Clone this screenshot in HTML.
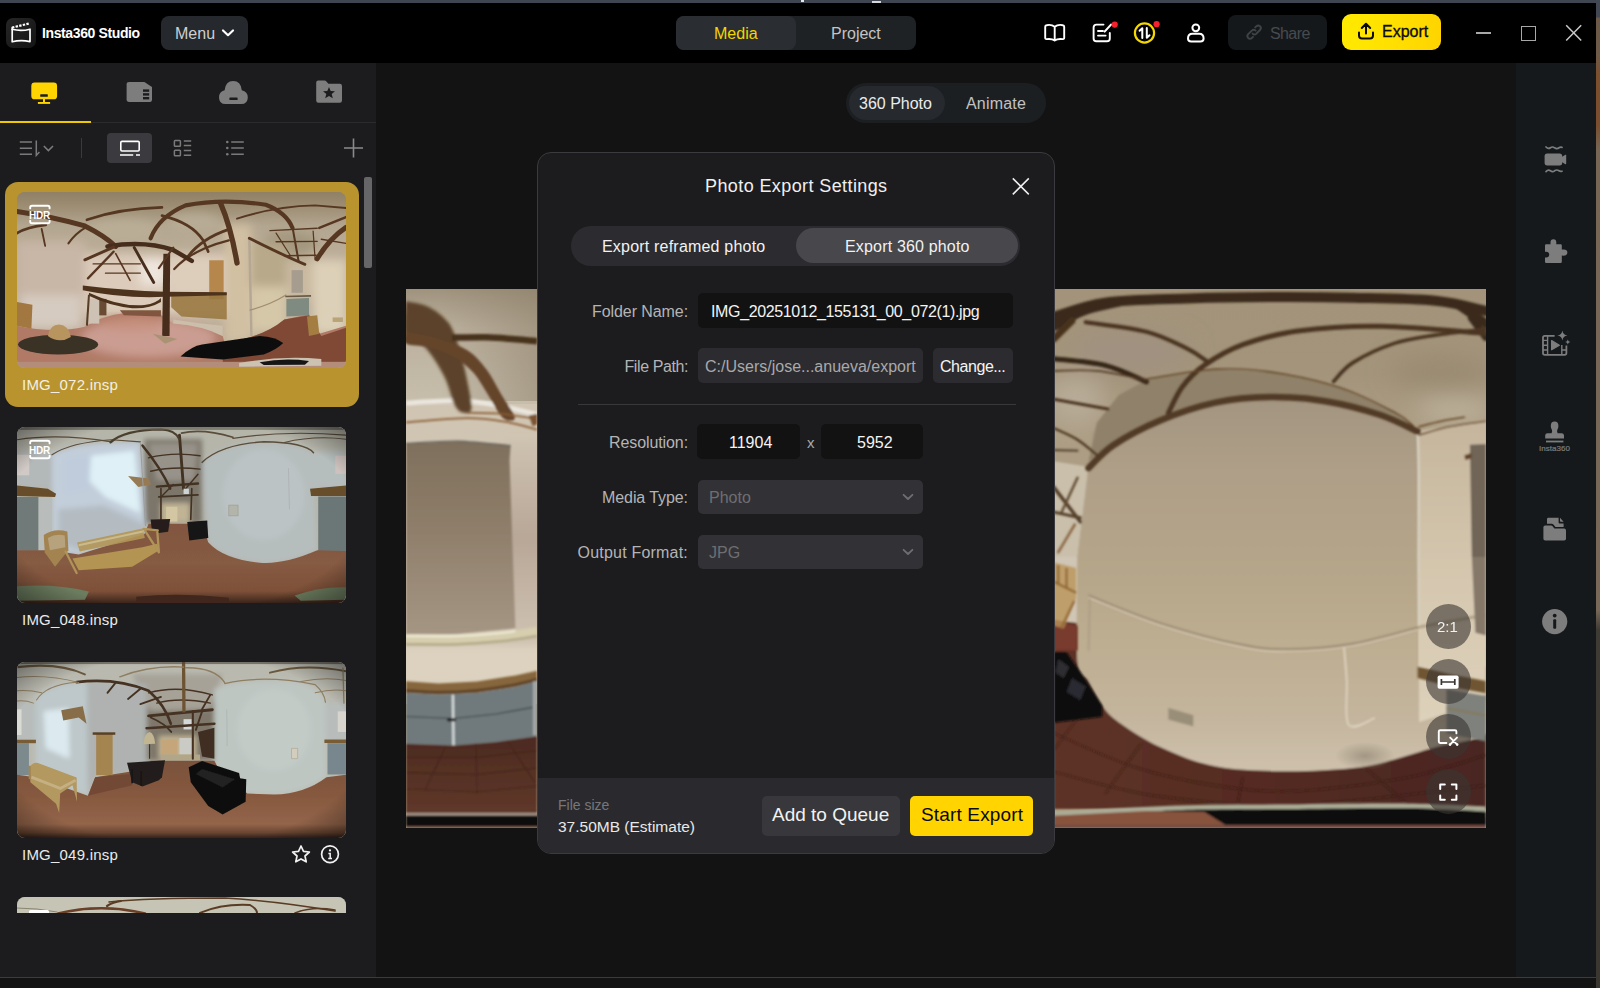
<!DOCTYPE html>
<html lang="en">
<head>
<meta charset="utf-8">
<title>Insta360 Studio</title>
<style>
*{box-sizing:border-box;margin:0;padding:0}
html,body{width:1600px;height:988px;overflow:hidden;background:#131313}
body{position:relative;font-family:"Liberation Sans",sans-serif;color:#e6e6e6;font-size:16px}
.abs{position:absolute}
.t{position:absolute;white-space:nowrap;line-height:1}
#deskTop{left:0;top:0;width:1600px;height:3px;background:#3f4651}
#deskRight{left:1596px;top:0;width:4px;height:988px;background:linear-gradient(#414853 0,#414853 17px,#6c5846 18px,#6e5a48 55px,#7c4f2e 75px,#7a4e2e 125px,#776654 150px,#786858 610px,#3e3a34 630px,#3a3630 988px)}
#titlebar{left:0;top:3px;width:1596px;height:60px;background:#000}
#sidebar{left:0;top:63px;width:376px;height:914px;background:#1c1c1e}
#main{left:376px;top:63px;width:1140px;height:914px;background:#131313}
#rightbar{left:1516px;top:63px;width:80px;height:914px;background:#15191c}
#statusline{left:0;top:977px;width:1596px;height:1px;background:#3c3c3c}
#status{left:0;top:978px;width:1596px;height:10px;background:#131313}
.ph{overflow:hidden;border-radius:8px;background:#888}
.ph svg{display:block;width:100%;height:100%}
.fb{width:45px;height:45px;border-radius:50%;background:rgba(58,54,50,.6)}
.lab{right:912px;font-size:16px;color:#b4b4b6;text-align:right}
</style>
</head>
<body>
<div class="abs" id="deskTop"></div>
<div class="abs" id="deskRight"></div>
<div class="abs" id="titlebar"></div>
<div class="abs" id="sidebar"></div>
<div class="abs" id="main"></div>
<div class="abs" id="rightbar"></div>
<div class="abs" id="statusline"></div>
<div class="abs" id="status"></div>

<!-- top desktop artifacts -->
<div class="abs" style="left:801px;top:0;width:3px;height:2px;background:#e8e8e8"></div>
<div class="abs" style="left:872px;top:1px;width:9px;height:2px;background:#d8d8d8"></div>
<!-- logo -->
<div class="abs" style="left:6px;top:18px;width:30px;height:30px;border-radius:7px;background:linear-gradient(135deg,#262626,#141414)"></div>
<svg class="abs" style="left:6px;top:18px" width="30" height="30" viewBox="0 0 30 30" fill="none" stroke="#fff">
<path d="M6.2 11.3 Q15 13.6 24 11.2 L24 23.6 Q15 21.6 6.2 23.8 Z" stroke-width="1.7" stroke-linejoin="round"/>
<path d="M6 9.6 L23.6 5.4" stroke-width="2.2" stroke-dasharray="2.4 1.3"/>
<path d="M6.2 9 L6.2 12" stroke-width="1.6"/>
</svg>
<div class="t" style="left:42px;top:26px;font-size:14px;font-weight:700;color:#fff;letter-spacing:-0.38px">Insta360 Studio</div>
<!-- menu -->
<div class="abs" style="left:161px;top:16px;width:87px;height:34px;border-radius:8px;background:#25282c"></div>
<div class="t" style="left:175px;top:26px;font-size:16px;color:#cfcfcf">Menu</div>
<svg class="abs" style="left:220px;top:27px" width="16" height="12" viewBox="0 0 16 12" fill="none" stroke="#fff" stroke-width="2.2" stroke-linecap="round" stroke-linejoin="round"><path d="M3 3.5 L8 8.2 L13 3.5"/></svg>
<!-- media/project -->
<div class="abs" style="left:676px;top:16px;width:240px;height:34px;border-radius:8px;background:#1f2225"></div>
<div class="abs" style="left:676px;top:16px;width:120px;height:34px;border-radius:8px;background:#2a2d32"></div>
<div class="t" style="left:714px;top:26px;font-size:16px;color:#f3d500">Media</div>
<div class="t" style="left:831px;top:26px;font-size:16px;color:#c4c4c4">Project</div>
<!-- book icon -->
<svg class="abs" style="left:1042px;top:21px" width="26" height="24" viewBox="0 0 26 24" fill="none" stroke="#fff" stroke-width="1.9" stroke-linejoin="round" stroke-linecap="round">
<path d="M12.7 5.8 C10.5 4 6.5 3.8 4.6 4.2 Q3.2 4.4 3.2 5.8 L3.2 16.8 Q3.2 18.3 4.7 18.1 C7 17.8 10.6 18 12.7 19.6 C14.8 18 18.4 17.8 20.7 18.1 Q22.2 18.3 22.2 16.8 L22.2 5.8 Q22.2 4.4 20.8 4.2 C18.9 3.8 14.9 4 12.7 5.8 Z M12.7 5.8 L12.7 19.4"/>
</svg>
<!-- edit icon -->
<svg class="abs" style="left:1090px;top:20px" width="30" height="26" viewBox="0 0 30 26" fill="none" stroke="#fff" stroke-width="1.9" stroke-linejoin="round" stroke-linecap="round">
<path d="M13.5 4.6 L6.4 4.6 Q3.6 4.6 3.6 7.4 L3.6 18.4 Q3.6 21.2 6.4 21.2 L17 21.2 Q19.8 21.2 19.8 18.4 L19.8 13"/>
<path d="M8 11 L13 11 M8 15.6 L15.6 15.6"/>
<path d="M14.6 11.6 L21 4.6" stroke-width="2.1"/>
<circle cx="24.7" cy="4.6" r="3.1" fill="#f5222d" stroke="none"/>
</svg>
<!-- sync icon -->
<svg class="abs" style="left:1130px;top:18px" width="32" height="30" viewBox="0 0 32 30" fill="none" stroke-linecap="round" stroke-linejoin="round">
<circle cx="14.5" cy="15" r="9.6" stroke="#f5d800" stroke-width="2.2"/>
<path d="M12.3 20 L12.3 10.2 L9.6 12.8" stroke="#fff" stroke-width="2"/>
<path d="M16.8 10 L16.8 19.8 L19.5 17.2" stroke="#fff" stroke-width="2"/>
<circle cx="26.6" cy="6.2" r="3.1" fill="#f5222d"/>
</svg>
<!-- user icon -->
<svg class="abs" style="left:1184px;top:21px" width="24" height="24" viewBox="0 0 24 24" fill="none" stroke="#fff" stroke-width="2">
<circle cx="11.8" cy="6.8" r="3.4"/>
<path d="M4 17.4 Q4 12.8 8.4 12.8 L15.2 12.8 Q19.6 12.8 19.6 17.4 Q19.6 20.4 16.4 20.4 L7.2 20.4 Q4 20.4 4 17.4 Z" stroke-linejoin="round"/>
</svg>
<!-- share -->
<div class="abs" style="left:1228px;top:15px;width:99px;height:35px;border-radius:8px;background:#15181b"></div>
<svg class="abs" style="left:1244px;top:22px" width="20" height="20" viewBox="0 0 20 20" fill="none" stroke="#3f4246" stroke-width="1.9" stroke-linecap="round" stroke-linejoin="round">
<path d="M8.6 11.6 Q10.4 13.4 12.4 11.6 L16 8 Q17.8 6 16 4.2 Q14.2 2.6 12.4 4.2 L11.2 5.4"/>
<path d="M11.6 8.6 Q9.8 6.8 7.8 8.6 L4.2 12.2 Q2.4 14.2 4.2 16 Q6 17.6 7.8 16 L9 14.8"/>
</svg>
<div class="t" style="left:1270px;top:26px;font-size:16px;color:#474a4e;letter-spacing:-0.6px">Share</div>
<!-- export -->
<div class="abs" style="left:1342px;top:14px;width:99px;height:36px;border-radius:9px;background:linear-gradient(90deg,#ffea00 0%,#ffe000 50%,#ffd400 100%)"></div>
<svg class="abs" style="left:1356px;top:21px" width="20" height="20" viewBox="0 0 20 20" fill="none" stroke="#0a0a0a" stroke-width="2" stroke-linecap="round" stroke-linejoin="round">
<path d="M10 12.4 L10 3.2 M5.8 7 L10 2.8 L14.2 7"/>
<path d="M3 11.6 L3 14.4 Q3 17.4 6 17.4 L14 17.4 Q17 17.4 17 14.4 L17 11.6"/>
</svg>
<div class="t" style="left:1382px;top:24px;font-size:16px;color:#0a0a0a;-webkit-text-stroke:0.3px #0a0a0a">Export</div>
<!-- window controls -->
<div class="abs" style="left:1476px;top:32px;width:15px;height:1.5px;background:#a8a8a8"></div>
<div class="abs" style="left:1521px;top:26px;width:15px;height:15px;border:1.6px solid #a8a8a8"></div>
<svg class="abs" style="left:1564px;top:23px" width="20" height="20" viewBox="0 0 20 20" stroke="#c8c8c8" stroke-width="1.5"><path d="M2.2 2.2 L17.2 17.6 M17.2 2.2 L2.2 17.6"/></svg>
<!--TITLEBAR-END-->
<!-- tab icons -->
<svg class="abs" style="left:28px;top:78px" width="32" height="30" viewBox="0 0 32 30">
<rect x="3.3" y="4.6" width="25.8" height="16.7" rx="3.4" fill="#ffd400"/>
<rect x="12.2" y="16.2" width="7.6" height="2.6" rx="0.6" fill="#1c1c1e"/>
<rect x="15" y="21" width="2" height="3.6" fill="#ffd400"/>
<rect x="9.9" y="24" width="12.2" height="1.9" fill="#ffd400"/>
</svg>
<svg class="abs" style="left:124px;top:78px" width="32" height="30" viewBox="0 0 32 30">
<path d="M5.2 4 L20.4 4 L28 9 L28 21.8 Q28 24 25.8 24 L5.2 24 Q2.6 24 2.6 21.6 L2.6 6.4 Q2.6 4 5.2 4 Z" fill="#7d7d7d"/>
<rect x="19" y="11.4" width="6.2" height="2.4" fill="#1c1c1e"/><rect x="19" y="15.2" width="6.2" height="2.4" fill="#1c1c1e"/><rect x="19" y="19" width="6.2" height="2.4" fill="#1c1c1e"/>
</svg>
<svg class="abs" style="left:216px;top:78px" width="36" height="30" viewBox="0 0 36 30">
<path d="M9.6 26 Q3 26 3 19.4 Q3 13.6 8.6 12.2 Q9.6 3 17.2 3 Q24.8 3 25.8 12.2 Q31.8 13.6 31.8 19.4 Q31.8 26 25.2 26 Z" fill="#7d7d7d"/>
<rect x="13.4" y="19.4" width="8.2" height="2.6" rx="0.6" fill="#1c1c1e"/>
</svg>
<svg class="abs" style="left:313px;top:78px" width="32" height="30" viewBox="0 0 32 30">
<path d="M5.2 2.5 L11.4 2.5 Q12.6 2.5 13.4 3.4 L15.4 5.8 L26.8 5.8 Q29 5.8 29 8 L29 22.6 Q29 24.8 26.8 24.8 L5.4 24.8 Q3.2 24.8 3.2 22.6 L3.2 4.6 Q3.2 2.5 5.2 2.5 Z" fill="#7d7d7d"/>
<path d="M16 9 L17.7 13 L22 13.3 L18.7 16.1 L19.8 20.3 L16 18 L12.2 20.3 L13.3 16.1 L10 13.3 L14.3 13 Z" fill="#1c1c1e"/>
</svg>
<div class="abs" style="left:0;top:122px;width:376px;height:1px;background:#2b2b2d"></div>
<div class="abs" style="left:0;top:121px;width:91px;height:2px;background:#f0c800"></div>
<!-- toolbar -->
<svg class="abs" style="left:16px;top:136px" width="44" height="24" viewBox="0 0 44 24" fill="none" stroke="#7a7a7a" stroke-width="1.5">
<path d="M3.8 6 L16 6 M3.8 12.2 L16 12.2 M3.8 18.2 L16 18.2"/>
<path d="M20.3 4.4 L20.3 19.4 L23.4 16"/>
<path d="M27.8 10 L32.4 14.6 L37 10" stroke-width="1.6"/>
</svg>
<div class="abs" style="left:81px;top:138px;width:1px;height:20px;background:#3a3a3c"></div>
<div class="abs" style="left:107px;top:133px;width:45px;height:30px;border-radius:4px;background:#3b3b3f"></div>
<svg class="abs" style="left:116px;top:136px" width="28" height="24" viewBox="0 0 28 24" fill="none" stroke="#fff" stroke-width="1.6">
<rect x="4.8" y="5.4" width="18.4" height="9.6" rx="1.2"/>
<path d="M4 19 L17.2 19 M20 19 L24 19"/>
</svg>
<svg class="abs" style="left:170px;top:136px" width="24" height="24" viewBox="0 0 24 24" fill="none" stroke="#7a7a7a" stroke-width="1.5">
<rect x="4.4" y="4.6" width="6" height="5.6" rx="0.8"/><rect x="4.4" y="14.2" width="6" height="5.6" rx="0.8"/>
<path d="M13.8 5 L21.2 5 M13.8 9.6 L21.2 9.6 M13.8 14.6 L21.2 14.6 M13.8 19.2 L21.2 19.2"/>
</svg>
<svg class="abs" style="left:222px;top:136px" width="24" height="24" viewBox="0 0 24 24" fill="none" stroke="#7a7a7a" stroke-width="1.6">
<path d="M9.2 6 L21.8 6 M9.2 12 L21.8 12 M9.2 18.2 L21.8 18.2"/>
<circle cx="5.3" cy="6" r="1.3" fill="#7a7a7a" stroke="none"/><circle cx="5.3" cy="12" r="1.3" fill="#7a7a7a" stroke="none"/><circle cx="5.3" cy="18.2" r="1.3" fill="#7a7a7a" stroke="none"/>
</svg>
<svg class="abs" style="left:342px;top:136px" width="24" height="24" viewBox="0 0 24 24" fill="none" stroke="#8a8a8a" stroke-width="1.6"><path d="M2 12 L21 12 M11.5 2.6 L11.5 21.4"/></svg>
<!-- scrollbar -->
<div class="abs" style="left:364px;top:177px;width:8px;height:91px;border-radius:2px;background:#666668"></div>
<!-- thumbnails -->
<div class="abs" style="left:5px;top:182px;width:354px;height:225px;border-radius:13px;background:#b9942e"></div>
<div class="abs ph" style="left:17px;top:192px;width:329px;height:176px"><svg viewBox="0 0 1600 856" preserveAspectRatio="none">
<defs><filter id="bl1" x="-5%" y="-5%" width="110%" height="110%"><feGaussianBlur stdDeviation="3.2"/></filter>
<filter id="bl1b" x="-10%" y="-10%" width="120%" height="120%"><feGaussianBlur stdDeviation="22"/></filter>
<linearGradient id="g1c" gradientUnits="userSpaceOnUse" x1="0" y1="0" x2="0" y2="330"><stop offset="0" stop-color="#908065"/><stop offset=".22" stop-color="#9d8e74"/><stop offset=".5" stop-color="#b3a690"/><stop offset="1" stop-color="#bdaf9a"/></linearGradient>
</defs>
<rect width="1600" height="856" fill="url(#g1c)"/>
<g filter="url(#bl1b)">
<ellipse cx="520" cy="190" rx="170" ry="55" fill="#B9AD96"/>
<ellipse cx="860" cy="150" rx="130" ry="45" fill="#B8AC95"/>
<ellipse cx="1330" cy="250" rx="130" ry="60" fill="#A3977F"/>
<rect x="0" y="240" width="330" height="430" fill="#C8B6A6"/>
<rect x="20" y="500" width="290" height="160" fill="#D6CBC0"/>
<rect x="330" y="300" width="690" height="300" fill="#DCCBBA"/>
<rect x="600" y="330" width="120" height="120" fill="#EEE6DE"/>
<rect x="760" y="330" width="180" height="160" fill="#DDCDBB"/>
<rect x="1010" y="160" width="130" height="570" fill="#D2C0A3"/>
<rect x="1140" y="250" width="170" height="210" fill="#B8A98A"/>
<rect x="1140" y="460" width="170" height="220" fill="#D5C8A8"/>
<rect x="1310" y="340" width="130" height="180" fill="#C9B9A0"/>
<rect x="1440" y="330" width="160" height="360" fill="#DDD0B8"/>
</g>
<g filter="url(#bl1)">
<path d="M0 650 Q180 690 330 655 Q420 600 520 590 L700 598 L760 640 Q900 650 1000 700 L1010 735 Q1200 705 1300 620 L1420 595 L1470 690 L1600 650 L1600 856 L0 856 Z" fill="#B07A66"/>
<g filter="url(#bl1b)"><ellipse cx="640" cy="710" rx="330" ry="95" fill="#CDA197" opacity=".9"/><ellipse cx="560" cy="640" rx="160" ry="35" fill="#C58D7A" opacity=".8"/></g>
<path d="M1010 735 Q1200 705 1300 620 L1420 600 L1480 700 L1600 660 L1600 830 L1000 830 Z" fill="#7C4834" opacity=".95"/>
<rect x="0" y="826" width="1600" height="30" fill="#B48C7A"/>
<path d="M500 575 L700 575 L700 605 L520 600 Z" fill="#80573f"/>
<rect x="345" y="520" width="55" height="120" fill="#cec2b4"/>
<rect x="400" y="520" width="35" height="80" fill="#674c32"/>
<path d="M0 535 L75 548 L70 665 L0 650 Z" fill="#a2773f"/>
<rect x="935" y="332" width="70" height="190" fill="#b6874d"/>
<path d="M750 490 L1020 490 L1020 620 L800 605 L750 560 Z" fill="#97763d" opacity=".85"/>
<path d="M760 620 Q880 640 1000 650 L1000 700 Q900 650 760 640 Z" fill="#cbbeaa"/>
<path d="M320 455 Q520 480 720 485 L1020 488 L1020 502 L720 510 Q520 520 320 478 Z" fill="#4d321c"/>
<path d="M350 490 Q500 560 620 550 Q680 540 700 515 L700 535 Q640 570 560 565 Q450 555 350 505 Z" fill="#4d321c"/>
<path d="M350 500 L340 650" stroke="#593e26" stroke-width="10" fill="none"/>
<path d="M1130 230 L1140 700" stroke="#b4a794" stroke-width="12" fill="none"/>
<path d="M1130 575 Q1230 550 1310 500" stroke="#a28d70" stroke-width="6" fill="none"/>
<rect x="1335" y="380" width="55" height="110" fill="#a69d8f"/>
<path d="M1310 520 L1420 515 L1420 600 L1310 605 Z" fill="#7f8a80"/>
<path d="M1305 508 L1430 505" stroke="#695a45" stroke-width="8"/>
<path d="M1410 605 L1460 600 L1470 690 L1420 700 Z" fill="#a37d42"/>
<rect x="1535" y="610" width="50" height="22" fill="#b8a479"/>
<ellipse cx="200" cy="742" rx="195" ry="48" fill="#3A3028"/>
<path d="M150 700 Q160 645 205 645 Q250 648 262 705 Q205 740 150 700 Z" fill="#b8945f"/>
<path d="M712 300 L745 300 L742 700 L706 700 Z" fill="#472d1c"/>
<path d="M660 690 L740 705 L780 715 L720 738 Z" fill="#aa9375"/>
<path d="M795 800 Q850 750 900 742 L1180 700 Q1260 705 1295 735 Q1260 770 1200 790 L1000 815 Z" fill="#0f0f0f"/>
<path d="M1080 832 Q1280 795 1480 812 L1480 845 L1080 850 Z" fill="#ccc2b2"/>
<path d="M1180 828 Q1300 805 1420 822 L1400 840 L1200 842 Z" fill="#181818"/>
<g fill="none" stroke="#573721" stroke-linecap="round">
<path d="M0 95 Q170 120 330 165 Q430 215 480 265" stroke-width="24"/>
<path d="M0 200 Q50 170 140 160" stroke-width="14"/>
<path d="M120 180 L137 262" stroke-width="9"/>
<path d="M250 250 Q285 200 335 172" stroke-width="10"/>
<path d="M340 135 Q500 80 705 75" stroke-width="13"/>
<path d="M650 225 Q690 120 820 65 Q1000 30 1210 62 Q1310 100 1340 175" stroke-width="20"/>
<path d="M705 115 Q850 150 905 235 L930 290" stroke-width="13"/>
<path d="M990 55 Q1040 170 1070 345" stroke-width="26"/>
<path d="M830 315 Q900 225 1030 182" stroke-width="14"/>
<path d="M765 375 Q850 280 1030 235" stroke-width="11"/>
<path d="M440 265 Q620 235 760 282 L850 335" stroke-width="22" stroke="#472d1c"/>
<path d="M330 330 L470 268" stroke-width="14"/>
<path d="M345 420 L470 290" stroke-width="11"/>
<path d="M570 270 L665 440" stroke-width="14" stroke="#472d1c"/>
<path d="M480 300 L550 430" stroke-width="8"/>
<path d="M370 350 L600 350 M430 395 L600 395" stroke-width="6"/>
<path d="M690 370 L760 270" stroke-width="10"/>
<path d="M1070 130 Q1250 70 1450 65 L1600 78" stroke-width="9"/>
<path d="M1130 225 Q1300 310 1400 352" stroke-width="14"/>
<path d="M1230 188 L1460 176 M1260 242 L1460 240 M1300 310 L1455 308" stroke-width="7"/>
<path d="M1340 172 L1370 340" stroke-width="10"/>
<path d="M1260 200 L1330 310 M1440 190 L1450 330" stroke-width="6"/>
<path d="M1460 325 Q1520 225 1600 172" stroke-width="24"/>
<path d="M1470 175 L1600 122" stroke-width="12"/>
<path d="M1480 230 L1600 250" stroke-width="7"/>
</g>
</g>
</svg></div>
<div class="t" style="left:22px;top:377px;font-size:15px;color:#f4efe2;letter-spacing:0.22px">IMG_072.insp</div>
<div class="abs ph" style="left:17px;top:427px;width:329px;height:176px"><svg viewBox="0 0 1600 856" preserveAspectRatio="none">
<defs><filter id="bl2" x="-5%" y="-5%" width="110%" height="110%"><feGaussianBlur stdDeviation="3.5"/></filter>
<filter id="bl2b" x="-10%" y="-10%" width="120%" height="120%"><feGaussianBlur stdDeviation="14"/></filter>
<linearGradient id="fl2" x1="0" y1="0" x2="0" y2="1"><stop offset="0" stop-color="#81563E"/><stop offset=".5" stop-color="#865B43"/><stop offset=".85" stop-color="#7E5038"/><stop offset="1" stop-color="#3C261A"/></linearGradient>
</defs>
<rect width="1600" height="856" fill="#b5b5aa"/>
<g filter="url(#bl2b)">
<!-- corridor dark -->
<path d="M620 60 L900 60 L900 470 L620 470 Z" fill="#7C766A"/>
<path d="M640 80 L880 80 L860 260 L680 260 Z" fill="#98938A"/>
<rect x="700" y="370" width="140" height="95" fill="#c0b495"/>
<!-- walls -->
<path d="M170 130 Q300 70 600 75 L625 480 L620 520 L300 620 L170 600 Z" fill="#C2CEDA"/>
<path d="M360 140 L570 115 L600 420 L430 340 L350 260 Z" fill="#DFF1F7"/><path d="M230 150 L360 140 L350 300 L230 330 Z" fill="#C0CCDC"/>
<path d="M200 400 L420 380 L620 470 L620 520 L300 600 L200 560 Z" fill="#B4BCC2"/>
<path d="M900 170 Q1000 80 1200 75 Q1400 80 1440 130 L1460 600 Q1300 670 1180 660 Q1000 640 930 560 Z" fill="#b6bdbd"/>
<ellipse cx="1200" cy="330" rx="200" ry="220" fill="#bcc3c4"/>
<rect x="0" y="120" width="170" height="180" fill="#b3b8b8"/>
<rect x="1440" y="120" width="160" height="180" fill="#b6bdbd"/>
</g>
<g filter="url(#bl2)">
<!-- windows -->
<rect x="0" y="135" width="60" height="100" fill="#d0c9c5"/>
<rect x="1548" y="140" width="52" height="88" fill="#cdc1bd"/>
<!-- shelves and doors -->
<rect x="0" y="340" width="105" height="262" fill="#6f7a79"/>
<rect x="105" y="340" width="65" height="262" fill="#b8bdbc"/>
<path d="M0 285 L150 300 L190 325 L185 340 L0 335 Z" fill="#684e29"/>
<rect x="1465" y="338" width="135" height="265" fill="#6b7776"/>
<path d="M1425 300 L1600 285 L1600 335 L1430 335 Z" fill="#684e29"/>
<!-- floor -->
<path d="M0 600 L170 600 L300 620 L620 520 L640 470 L900 470 L930 560 Q1000 640 1180 660 Q1300 670 1460 600 L1600 603 L1600 856 L0 856 Z" fill="url(#fl2)"/>

<path d="M0 775 Q180 760 350 800 L330 840 L0 845 Z" fill="#6c7b5e"/>
<path d="M1350 820 Q1480 775 1600 780 L1600 840 L1380 845 Z" fill="#6c7b5e"/>
<path d="M580 825 Q800 805 1030 830 L1030 856 L580 856 Z" fill="#3f271c"/>
<!-- corridor details -->
<g fill="none" stroke="#423122" stroke-linecap="round">
<path d="M610 90 Q700 200 745 300" stroke-width="12"/>
<path d="M790 40 L810 300" stroke-width="14"/>
<path d="M640 150 Q760 120 890 140" stroke-width="7"/>
<path d="M650 215 Q760 190 890 205" stroke-width="7"/>
<path d="M680 290 L880 275" stroke-width="12"/>
<path d="M690 340 L880 330" stroke-width="9"/>
<path d="M700 300 L700 460 M850 300 L845 450" stroke-width="8"/>
<path d="M700 340 L760 280 M880 230 L820 300" stroke-width="7"/>
</g>
<rect x="725" y="388" width="55" height="72" fill="#d2c6a3"/>
<rect x="810" y="300" width="26" height="26" fill="#ced3d4"/>
<!-- furniture -->
<path d="M650 450 L745 448 L735 510 L690 515 L655 495 Z" fill="#251f1c"/>
<path d="M828 462 L925 455 L930 540 L838 552 Z" fill="#141414"/>
<path d="M540 238 L640 250 L652 280 L590 292 Z" fill="#957a53"/>
<rect x="1030" y="380" width="45" height="52" fill="#b3b5aa" stroke="#a1a399" stroke-width="4"/>
<path d="M1320 200 L1325 400" stroke="#afb4b8" stroke-width="5"/>
<!-- chair -->
<path d="M130 525 Q180 490 245 508 L250 600 L185 680 L135 610 Z" fill="#a3834f"/>
<path d="M150 540 Q190 515 232 528 L235 585 L160 600 Z" fill="#b6a37e"/>
<!-- bench -->
<path d="M292 562 L610 494 L622 540 L305 605 Z" fill="#b39658" opacity=".9"/>
<path d="M300 575 L612 508" stroke="#c9bb8e" stroke-width="10"/>
<path d="M270 640 L610 585 L682 568 L692 600 L560 680 L300 697 Z" fill="#b49453"/>
<path d="M236 605 L290 710 M620 500 L690 610 M682 505 L690 605 M615 495 L685 503" stroke="#b09359" stroke-width="11" fill="none" stroke-linecap="round"/>
<!-- ceiling arches -->
<g fill="none" stroke="#5a4d3b" stroke-linecap="round">
<path d="M0 62 Q200 30 460 72" stroke-width="6"/>
<path d="M170 135 Q260 75 460 62 L600 72" stroke-width="6"/>
<path d="M455 75 Q520 15 700 12 Q770 15 790 60" stroke-width="11" stroke="#4c3f2e"/>
<path d="M800 30 Q900 5 1050 50" stroke-width="8"/>
<path d="M900 172 Q990 85 1200 72 Q1400 75 1442 125" stroke-width="7"/>
<path d="M1050 55 Q1300 15 1600 40" stroke-width="6"/>
<path d="M1300 75 Q1450 40 1600 60" stroke-width="5"/>
<path d="M600 75 L625 480" stroke-width="5" stroke="#9d9e9c"/>
</g>
<rect x="0" y="0" width="1600" height="14" fill="#6a655a" opacity=".7"/>
</g>
<radialGradient id="vg2" cx=".5" cy=".5" r=".75"><stop offset=".72" stop-color="#000000" stop-opacity="0"/><stop offset="1" stop-color="#000000" stop-opacity=".55"/></radialGradient><rect width="1600" height="856" fill="url(#vg2)"/>
</svg></div>
<div class="t" style="left:22px;top:612px;font-size:15px;color:#eaeaea;letter-spacing:0.22px">IMG_048.insp</div>
<div class="abs ph" style="left:17px;top:662px;width:329px;height:176px"><svg viewBox="0 0 1600 856" preserveAspectRatio="none">
<defs><filter id="bl3" x="-5%" y="-5%" width="110%" height="110%"><feGaussianBlur stdDeviation="3.5"/></filter>
<filter id="bl3b" x="-10%" y="-10%" width="120%" height="120%"><feGaussianBlur stdDeviation="14"/></filter>
<linearGradient id="fl3" x1="0" y1="0" x2="0" y2="1"><stop offset="0" stop-color="#7A513C"/><stop offset=".45" stop-color="#86593F"/><stop offset=".82" stop-color="#93654A"/><stop offset=".93" stop-color="#6A4632"/><stop offset="1" stop-color="#35221A"/></linearGradient>
</defs>
<rect width="1600" height="856" fill="#b9b9af"/>
<g filter="url(#bl3b)">
<path d="M630 100 L960 100 L960 480 L630 480 Z" fill="#7E776A"/>
<path d="M560 60 L1000 60 L940 230 L650 240 Z" fill="#A6A298"/>
<rect x="690" y="360" width="180" height="110" fill="#c1b293"/>
<path d="M90 180 Q160 100 340 95 L345 650 L90 560 Z" fill="#bec8ca"/>
<path d="M340 95 L630 110 L630 520 L380 560 L345 650 Z" fill="#afb2b1"/>
<path d="M130 240 L250 225 L255 470 L140 420 Z" fill="#DCEAF0"/>
<path d="M960 130 Q1100 85 1300 90 Q1460 100 1500 190 L1505 560 Q1400 640 1250 645 L1120 640 L960 500 Z" fill="#BEC6C2"/>
<ellipse cx="1250" cy="330" rx="180" ry="200" fill="#C3CBC7"/>
<rect x="0" y="200" width="90" height="180" fill="#b8bdbc"/>
<rect x="1500" y="200" width="100" height="180" fill="#b8bdbc"/>
</g>
<g filter="url(#bl3)">
<rect x="0" y="230" width="22" height="125" fill="#d9dad3"/>
<rect x="1560" y="240" width="40" height="100" fill="#d6d4cc"/>
<rect x="0" y="395" width="58" height="155" fill="#7b8a8e"/>
<rect x="0" y="378" width="92" height="17" fill="#775c34"/>
<rect x="1510" y="395" width="90" height="152" fill="#77878d"/>
<rect x="1495" y="377" width="105" height="17" fill="#775c34"/>
<!-- floor -->
<path d="M0 548 L90 560 L345 650 L380 560 L630 520 L650 480 L960 480 L980 520 L1120 640 L1250 645 Q1400 640 1505 560 L1600 548 L1600 856 L0 856 Z" fill="url(#fl3)"/>
<path d="M345 650 L380 560 L560 545 L560 600 Z" fill="#683f30" opacity=".6"/>
<!-- door -->
<rect x="385" y="350" width="80" height="200" fill="#a48450"/>
<rect x="368" y="342" width="110" height="12" fill="#5a3f24"/>
<!-- corridor -->
<rect x="700" y="376" width="80" height="74" fill="#c4a67a"/>
<rect x="790" y="370" width="60" height="80" fill="#cbcbc6"/>
<rect x="700" y="450" width="190" height="28" fill="#b2a688"/>
<path d="M880 340 L960 320 L960 470 L900 460 Z" fill="#3f2e21"/>
<rect x="810" y="278" width="40" height="50" fill="#d4d8d8"/>
<g fill="none" stroke="#443121" stroke-linecap="round">
<path d="M290 98 Q480 75 640 140 Q720 210 748 300" stroke-width="13"/>
<path d="M640 262 L950 232" stroke-width="14"/>
<path d="M630 322 L960 300" stroke-width="12"/>
<path d="M855 240 L855 470" stroke-width="10"/>
<path d="M650 270 Q720 300 750 340 M900 240 L870 330 M940 160 L900 230" stroke-width="9"/>
<path d="M440 150 L480 100 M540 180 L600 130 M600 205 L700 170" stroke-width="9"/>
<path d="M640 150 Q780 110 950 160" stroke-width="7"/>
<path d="M680 200 Q790 170 940 200" stroke-width="7"/>
</g>
<path d="M810 0 L812 245" stroke="#6e5232" stroke-width="16" fill="none"/>
<path d="M615 400 Q620 345 645 340 Q668 348 672 398 Z" fill="#c1b691"/>
<path d="M645 400 L645 470" stroke="#312922" stroke-width="5"/>
<!-- hooks -->
<path d="M215 235 L320 215 L338 300 L300 270 L225 285 Z" fill="#886d48"/>
<path d="M1335 420 L1365 420 L1365 470 L1335 470 Z" fill="#d2cdbc" stroke="#b3ac9a" stroke-width="4"/>
<path d="M1020 230 L1022 410" stroke="#b2b6b7" stroke-width="5"/>
<!-- table -->
<path d="M535 490 L720 478 L705 560 L690 575 L610 605 L560 585 Z" fill="#241f1c"/>
<path d="M560 520 L560 590 M605 530 L605 603" stroke="#181413" stroke-width="8"/>
<!-- bench -->
<path d="M62 510 Q80 485 105 492 L290 562 L292 680 L270 600 L210 640 L205 735 L190 690 L65 585 Z" fill="#b39861"/>
<path d="M70 560 L210 615 L285 575" stroke="#c4b082" stroke-width="14" fill="none"/>
<path d="M62 505 L62 570" stroke="#a3854f" stroke-width="10"/>
<!-- sofa -->
<path d="M835 512 L900 482 L1080 540 L1085 565 L1115 570 L1112 680 L1000 742 L930 700 L845 585 Z" fill="#101010"/>
<path d="M900 520 L1060 570 L1000 610 L870 545 Z" fill="#242426" opacity=".8"/>
<!-- ceiling arches -->
<g fill="none" stroke="#8E7E62" stroke-linecap="round">
<path d="M0 75 Q150 60 300 100" stroke-width="5"/>
<path d="M0 140 Q60 135 120 150 M0 190 Q40 185 80 200" stroke-width="5"/>
<path d="M95 185 Q140 110 290 98" stroke-width="5"/>
<path d="M0 25 Q200 0 330 60" stroke-width="10" stroke="#69583e"/>
<path d="M500 72 Q650 15 810 25" stroke-width="7"/>
<path d="M820 28 Q960 25 1010 100" stroke-width="7"/>
<path d="M1010 105 Q1200 60 1450 110 Q1495 150 1500 195" stroke-width="6"/>
<path d="M1230 52 Q1400 5 1600 45" stroke-width="9" stroke="#69583e"/>
<path d="M1380 95 Q1500 70 1600 90 M1450 150 Q1530 130 1600 140" stroke-width="5"/>
<path d="M1585 30 L1590 200" stroke-width="6"/>
</g>
<rect x="0" y="0" width="1600" height="10" fill="#4c463e" opacity=".6"/>
</g>
<radialGradient id="vg3" cx=".5" cy=".5" r=".75"><stop offset=".72" stop-color="#000000" stop-opacity="0"/><stop offset="1" stop-color="#000000" stop-opacity=".55"/></radialGradient><rect width="1600" height="856" fill="url(#vg3)"/>
</svg></div>
<div class="t" style="left:22px;top:847px;font-size:15px;color:#eaeaea;letter-spacing:0.22px">IMG_049.insp</div>
<div class="abs ph" style="left:17px;top:897px;width:329px;height:16px;overflow:hidden;border-radius:8px 8px 0 0"><svg viewBox="0 0 329 16" preserveAspectRatio="none">
<rect width="329" height="16" fill="#C6C4B4"/>
<g fill="none" stroke="#5A3C24" stroke-linecap="round">
<path d="M92 5 Q130 1 208 1 Q258 4 318 14" stroke-width="1.6"/>
<path d="M183 16 Q205 6.5 233 8 Q240 12 240 16" stroke-width="2"/>
<path d="M278 16 Q295 9 318 13" stroke-width="1.6"/>
<path d="M41 16.5 Q84 6 128 16.5" stroke-width="2.6" stroke="#6A4028"/>
<path d="M90 9 Q96 5 104 4" stroke-width="2.2"/>
<path d="M0 11 Q20 11 40 15" stroke-width="1" stroke="#8A8470"/>
</g>
<rect x="12" y="13" width="20" height="4" rx="1.5" fill="#ffffff"/>
</svg></div>
<!-- HDR badges -->
<svg class="abs" style="left:28px;top:203px" width="24" height="23" viewBox="0 0 24 23" fill="none" stroke="#fff" stroke-width="1.9" stroke-linecap="round" stroke-linejoin="round"><path d="M2.2 5.4 L2.2 4.6 Q2.2 2.8 4 2.8 L19.8 2.8 Q21.6 2.8 21.6 4.6 L21.6 5.4"/><path d="M2.2 17.6 L2.2 18.4 Q2.2 20.2 4 20.2 L19.8 20.2 Q21.6 20.2 21.6 18.4 L21.6 17.6"/></svg>
<div class="t" style="left:28.9px;top:210.5px;font-size:10px;font-weight:700;color:#fff;letter-spacing:-0.12px">HDR</div><svg class="abs" style="left:28px;top:438px" width="24" height="23" viewBox="0 0 24 23" fill="none" stroke="#fff" stroke-width="1.9" stroke-linecap="round" stroke-linejoin="round"><path d="M2.2 5.4 L2.2 4.6 Q2.2 2.8 4 2.8 L19.8 2.8 Q21.6 2.8 21.6 4.6 L21.6 5.4"/><path d="M2.2 17.6 L2.2 18.4 Q2.2 20.2 4 20.2 L19.8 20.2 Q21.6 20.2 21.6 18.4 L21.6 17.6"/></svg>
<div class="t" style="left:28.9px;top:445.5px;font-size:10px;font-weight:700;color:#fff;letter-spacing:-0.12px">HDR</div>
<!-- star / info -->
<svg class="abs" style="left:290px;top:843px" width="22" height="22" viewBox="0 0 22 22" fill="none" stroke="#f2f2f2" stroke-width="1.7" stroke-linejoin="round"><path d="M11 3 L13.5 8.3 L19.4 9 L15 13 L16.2 18.8 L11 15.9 L5.8 18.8 L7 13 L2.6 9 L8.5 8.3 Z"/></svg>
<svg class="abs" style="left:319px;top:843px" width="22" height="22" viewBox="0 0 22 22" fill="none" stroke="#f2f2f2" stroke-width="1.7"><circle cx="11" cy="11.2" r="8.4"/><circle cx="11" cy="7.4" r="1.15" fill="#f2f2f2" stroke="none"/><path d="M9.4 10.4 L11.2 10.4 L11.2 15.4 M9.2 15.4 L13 15.4" stroke-width="1.5"/></svg>
<!--SIDEBAR-END-->
<!-- pill -->
<div class="abs" style="left:846px;top:83px;width:200px;height:40px;border-radius:20px;background:#1c1f22"></div>
<div class="abs" style="left:849px;top:86px;width:96px;height:34px;border-radius:17px;background:#26292d"></div>
<div class="t" style="left:859px;top:96px;font-size:16px;color:#ececec">360 Photo</div>
<div class="t" style="left:966px;top:96px;font-size:16px;color:#c2c2c2;letter-spacing:0.2px">Animate</div>
<!-- main photo -->
<div class="abs" style="left:406px;top:289px;width:1080px;height:539px;overflow:hidden;background:#d8cdb8"><svg viewBox="406 289 1080 539" preserveAspectRatio="none">
<defs><filter id="blm" x="-5%" y="-5%" width="110%" height="110%"><feGaussianBlur stdDeviation="0.8"/></filter>
<filter id="blmb" x="-20%" y="-20%" width="140%" height="140%"><feGaussianBlur stdDeviation="12"/></filter>
<filter id="blmc" x="-10%" y="-10%" width="120%" height="120%"><feGaussianBlur stdDeviation="3"/></filter>
<linearGradient id="gscr" gradientUnits="userSpaceOnUse" x1="0" y1="442" x2="0" y2="634"><stop offset="0" stop-color="#7F705D"/><stop offset=".4" stop-color="#8C7C68"/><stop offset="1" stop-color="#A59684"/></linearGradient>
<linearGradient id="gceilL" gradientUnits="userSpaceOnUse" x1="0" y1="289" x2="0" y2="400"><stop offset="0" stop-color="#9F937E"/><stop offset=".35" stop-color="#BBB09D"/><stop offset="1" stop-color="#C6BDAB"/></linearGradient>
<linearGradient id="gshL" gradientUnits="userSpaceOnUse" x1="440" y1="0" x2="540" y2="0"><stop offset="0" stop-color="#8A7C66" stop-opacity="0"/><stop offset="1" stop-color="#8A7C66" stop-opacity=".5"/></linearGradient>
<linearGradient id="gwsL" gradientUnits="userSpaceOnUse" x1="0" y1="442" x2="0" y2="634"><stop offset="0" stop-color="#CDC1B0"/><stop offset=".5" stop-color="#B8A797"/><stop offset="1" stop-color="#CDC0B0"/></linearGradient>
<linearGradient id="gceilR" gradientUnits="userSpaceOnUse" x1="0" y1="289" x2="0" y2="430"><stop offset="0" stop-color="#A2937A"/><stop offset=".6" stop-color="#A3947B"/><stop offset="1" stop-color="#AC9D84"/></linearGradient>
<linearGradient id="gwallR" gradientUnits="userSpaceOnUse" x1="0" y1="400" x2="0" y2="775"><stop offset="0" stop-color="#A39581"/><stop offset=".19" stop-color="#AF9F88"/><stop offset=".48" stop-color="#B6A68A"/><stop offset=".67" stop-color="#BEAE92"/><stop offset=".85" stop-color="#C4B59E"/><stop offset="1" stop-color="#CFC2AD"/></linearGradient>
<linearGradient id="gfarR" gradientUnits="userSpaceOnUse" x1="0" y1="430" x2="0" y2="740"><stop offset="0" stop-color="#C6B69E"/><stop offset=".5" stop-color="#D6C8B0"/><stop offset="1" stop-color="#DED2BC"/></linearGradient>
<linearGradient id="gflL" gradientUnits="userSpaceOnUse" x1="0" y1="745" x2="0" y2="813"><stop offset="0" stop-color="#4E2C20"/><stop offset="1" stop-color="#5F382A"/></linearGradient>
<linearGradient id="gflR" gradientUnits="userSpaceOnUse" x1="1054" y1="0" x2="1486" y2="0"><stop offset="0" stop-color="#5e3327"/><stop offset=".5" stop-color="#542b22"/><stop offset="1" stop-color="#4a2720"/></linearGradient>
</defs>
<rect x="406" y="289" width="1080" height="539" fill="#b0a086"/>
<rect x="406" y="289" width="140" height="160" fill="url(#gceilL)"/>
<rect x="406" y="289" width="140" height="112" fill="url(#gshL)"/>
<rect x="406" y="404" width="140" height="300" fill="#D0C4B2"/>
<g filter="url(#blmc)">
<rect x="506" y="440" width="46" height="200" fill="url(#gwsL)"/>
<rect x="400" y="646" width="150" height="40" fill="#DCD2BF"/>
</g>
<g filter="url(#blm)">
<path d="M406.0 403.1 C414.6 402.7 442.7 400.5 457.7 400.8 C472.7 401.1 483.0 402.7 496.2 405.0 C509.4 407.3 530.3 413.0 537.1 414.6" stroke="#EAE6DE" stroke-width="5" fill="none"/>
<path d="M406.0 443.5 L457.7 441.2 L510.6 445.8 L509.6 460.0 L511.5 517.7 L515.4 628.3 L457.7 634.0 L406.0 634.0 Z" fill="url(#gscr)"/>
<path d="M406.0 443.5 C414.6 443.1 440.3 440.8 457.7 441.2 C475.1 441.6 501.8 445.0 510.6 445.8" stroke="#65655D" stroke-width="1.4" fill="none"/>
<path d="M406.0 639.8 C414.6 639.8 442.0 640.3 457.7 639.8 C473.4 639.3 486.8 638.2 500.0 636.9 C513.2 635.5 530.9 632.6 537.1 631.7" stroke="#D6CEAE" stroke-width="10" fill="none"/>
<path d="M406.0 636.0 C414.6 636.0 442.0 636.5 457.7 636.0 C473.4 635.5 490.4 634.0 500.0 633.1 C509.6 632.2 512.8 631.2 515.4 630.8" stroke="#ECE8D0" stroke-width="2.5" fill="none"/>
<path d="M406.0 644.2 C414.6 644.2 442.0 644.7 457.7 644.2 C473.4 643.7 486.8 642.7 500.0 641.3 C513.2 639.9 530.9 636.9 537.1 636.0" stroke="#B3AA88" stroke-width="2.5" fill="none"/>
<path d="M406.0 681.3 L438.5 683.5 L476.9 681.5 L515.4 675.4 L537.1 670.8 L537.1 681.3 L515.4 687.1 L476.9 692.9 L438.5 694.8 L406.0 692.9 Z" fill="#86663E"/>
<path d="M406.0 690.4 C411.4 690.7 426.7 692.3 438.5 692.3 C450.3 692.3 464.1 691.7 476.9 690.4 C489.7 689.1 505.4 686.5 515.4 684.6 C525.4 682.7 533.5 680.1 537.1 679.2" stroke="#5E4226" stroke-width="3" fill="none"/>
<path d="M406.0 692.9 L438.5 694.8 L476.9 692.9 L515.4 687.1 L537.1 681.3 L537.1 736.2 L496.2 741.9 L453.8 745.4 L406.0 743.8 Z" fill="#6F797B"/>
<path d="M406.0 716.5 L453.8 718.5 L496.2 714.0 L532.7 707.3" stroke="#3E4446" stroke-width="1.2" fill="none"/>
<path d="M452.9 694.8 L453.5 745.4" stroke="#D8DCDC" stroke-width="2.4" fill="none"/>
<path d="M447.1 719.8 L455.8 719.8" stroke="#1A1A1A" stroke-width="3" fill="none"/>
<path d="M534.6 681.3 L534.6 735.2" stroke="#A8ACAC" stroke-width="3" fill="none"/>
<path d="M406.0 743.8 L453.8 745.4 L496.2 741.9 L537.1 736.2 L537.1 814.0 L406.0 814.0 Z" fill="url(#gflL)"/>
<path d="M406.0 757.3 L476.9 757.3 L537.1 750.6" stroke="#43221A" stroke-width="1.2" fill="none" opacity=".7"/>
<path d="M406.0 772.7 L476.9 774.6 L537.1 767.9" stroke="#43221A" stroke-width="1.2" fill="none" opacity=".7"/>
<path d="M406.0 789.0 L476.9 791.9 L537.1 786.2" stroke="#43221A" stroke-width="1.2" fill="none" opacity=".7"/>
<path d="M446.2 745.4 L425.0 790.0" stroke="#43221A" stroke-width="1.2" fill="none" opacity=".7"/>
<path d="M476.0 743.8 L476.9 793.8" stroke="#43221A" stroke-width="1.2" fill="none" opacity=".7"/>
<path d="M507.7 741.0 L534.6 782.3" stroke="#43221A" stroke-width="1.2" fill="none" opacity=".7"/>
<rect x="406" y="813" width="140" height="2.5" fill="#A8968A"/>
<rect x="406" y="815.5" width="140" height="11" fill="#0E0E0E"/>
<rect x="406" y="826.5" width="140" height="1.5" fill="#6A4A3E"/>
<path d="M406.0 301.2 C409.8 302.1 421.8 303.4 428.8 306.9 C435.8 310.4 443.3 316.2 448.1 322.3 C452.9 328.4 454.8 335.2 457.7 343.5 C460.6 351.8 463.1 361.6 465.4 372.3 C467.7 383.0 471.8 401.2 471.5 407.9 C471.2 414.6 466.3 413.2 463.5 412.7 C460.7 412.2 458.0 411.1 454.8 405.0 C451.6 398.9 449.2 385.8 444.2 376.2 C439.2 366.6 431.4 354.0 425.0 347.3 C418.6 340.6 409.2 343.5 406.0 335.8 C402.8 328.1 406.0 307.0 406.0 301.2 Z" fill="#5C422A" filter="url(#blm)"/>
<path d="M406.0 331.5 C411.4 332.7 428.3 335.6 438.5 338.7 C448.7 341.8 459.3 345.1 467.3 350.2 C475.3 355.3 480.7 361.9 486.5 369.4 C492.3 376.9 497.3 387.9 501.9 395.4 C506.4 402.9 512.0 410.4 513.8 414.6 C515.6 418.8 514.5 420.0 512.5 420.4 C510.5 420.8 505.9 421.1 501.9 416.9 C497.9 412.7 493.3 402.8 488.5 395.4 C483.7 388.0 478.9 378.7 473.1 372.3 C467.3 365.9 461.2 361.1 453.8 356.9 C446.4 352.7 436.8 349.5 428.8 347.3 C420.8 345.1 409.8 346.1 406.0 343.5 C402.2 340.9 406.0 333.5 406.0 331.5 Z" fill="#65442C"/>
<path d="M451.9 337.7 C457.7 337.6 475.9 337.1 486.5 337.3 C497.1 337.6 507.0 338.6 515.4 339.2 C523.8 339.8 533.5 340.9 537.1 341.2" stroke="#47301A" stroke-width="6.5" fill="none"/>
<path d="M406.0 422.3 C416.2 421.6 450.7 418.2 467.3 418.1 C483.9 418.0 494.2 420.0 505.8 421.9 C517.4 423.8 531.9 428.3 537.1 429.6" stroke="#8A5E36" stroke-width="1.8" fill="none"/>
<path d="M467.3 412.7 C472.8 412.9 489.4 412.8 500.0 413.7 C510.6 414.6 525.7 417.4 530.8 418.1" stroke="#8A5E36" stroke-width="1.6" fill="none"/>
<path d="M528.8 415.6 L537.1 413.7 L537.1 424.2 L532.7 426.2 Z" fill="#7A5232"/>
</g>
<rect x="1040" y="289" width="446" height="250" fill="url(#gceilR)"/>
<g filter="url(#blmb)">
<ellipse cx="1130" cy="352" rx="60" ry="20" fill="#A09181"/>
<ellipse cx="1440" cy="372" rx="50" ry="16" fill="#9A8A72"/>
<ellipse cx="1455" cy="410" rx="40" ry="6" fill="#D0C8B4"/>
<ellipse cx="1075" cy="400" rx="30" ry="25" fill="#B8AC98"/>
</g>
<g filter="url(#blm)">
<path d="M1417.6 430.9 L1485.8 419.9 L1485.8 557.0 L1485.8 557.0 L1485.8 694.7 L1418.9 747.0 Z" fill="url(#gfarR)"/>
<path d="M1053.9 461.2 L1088.5 466.7 L1077.5 557.0 L1053.9 557.0 Z" fill="#c9bfab"/>
<path d="M1053.9 557.0 L1077.5 557.0 L1077.5 661.6 L1053.9 653.4 Z" fill="#d0c6b5"/>
<path d="M1053.9 620.3 L1077.5 623.1 L1077.5 661.6 L1102.3 705.7 L1118.8 722.2 L1160.1 736.0 L1215.2 749.7 L1284.0 755.2 L1352.9 749.7 L1394.2 744.2 L1435.5 733.2 L1485.8 722.2 L1485.8 808.9 L1053.9 808.9 Z" fill="url(#gflR)"/>
<path d="M1088.5 468.1 L1091.3 433.7 L1113.3 403.4 L1140.9 386.9 L1215.2 402.0 L1270.3 396.5 L1325.3 400.6 L1380.4 414.4 L1417.6 430.9 L1418.9 557.0 L1418.9 722.2 L1485.8 700.2 C1485.8 705.7 1494.2 725.4 1485.8 733.2 C1477.4 741.0 1450.8 742.6 1435.5 747.0 C1420.2 751.4 1408.0 755.9 1394.2 759.4 C1380.4 762.9 1371.3 765.9 1352.9 767.9 C1334.5 769.9 1307.0 771.5 1284.0 771.2 C1261.0 770.9 1235.9 770.3 1215.2 766.3 C1194.5 762.3 1176.2 754.4 1160.1 747.0 C1144.0 739.6 1128.4 729.1 1118.8 722.2 C1109.2 715.3 1107.3 712.6 1102.3 705.7 C1097.2 698.8 1092.6 688.2 1088.5 680.9 C1084.4 673.5 1079.3 682.2 1077.5 661.6 C1075.7 641.0 1077.5 574.4 1077.5 557.0 Z" fill="url(#gwallR)"/>
<path d="M1113.3 444.7 L1160.1 419.9 L1215.2 402.0 L1270.3 396.5 L1325.3 400.6 L1380.4 414.4 L1413.4 426.8 L1394.2 411.7 L1339.1 386.9 L1270.3 371.7 L1215.2 369.0 L1146.4 380.0 L1118.8 395.1 L1096.8 422.7 L1088.5 461.2 Z" fill="#90826A"/>
</g>
<radialGradient id="gshd" cx="1365" cy="757" r="30" gradientUnits="userSpaceOnUse" gradientTransform="translate(0 400) scale(1 .47)"><stop offset="0" stop-color="#9C917E" stop-opacity=".85"/><stop offset="1" stop-color="#9C917E" stop-opacity="0"/></radialGradient><ellipse cx="1365" cy="756" rx="30" ry="14" fill="url(#gshd)"/>
<g filter="url(#blm)">
<path d="M1418.9 432.3 L1485.8 420.7 L1485.8 557.0 L1418.9 557.0 Z" fill="url(#gfarR)"/>
<path d="M1418.9 557.0 L1485.8 557.0 L1485.8 667.1 L1418.9 667.1 Z" fill="url(#gfarR)"/>
<path d="M1053.9 733.2 C1067.0 738.7 1105.7 757.6 1132.6 766.3 C1159.5 775.0 1187.7 781.4 1215.2 785.5 C1242.7 789.6 1265.7 792.4 1297.8 791.0 C1329.9 789.6 1376.6 783.3 1407.9 777.3 C1439.2 771.3 1472.8 758.9 1485.8 755.2" stroke="#381c16" stroke-width="1.3" fill="none" opacity=".6"/>
<path d="M1053.9 771.8 C1071.6 775.9 1119.4 791.0 1160.1 796.5 C1200.8 802.0 1243.5 806.6 1297.8 804.8 C1352.1 803.0 1454.5 788.7 1485.8 785.5" stroke="#381c16" stroke-width="1.3" fill="none" opacity=".6"/>
<path d="M1083.0 711.2 L1053.9 749.7" stroke="#381c16" stroke-width="1.3" fill="none" opacity=".6"/>
<path d="M1140.9 744.2 L1105.1 793.8" stroke="#381c16" stroke-width="1.3" fill="none" opacity=".6"/>
<path d="M1242.7 777.3 L1237.2 806.2" stroke="#381c16" stroke-width="1.3" fill="none" opacity=".6"/>
<path d="M1366.6 769.0 L1407.9 804.8" stroke="#381c16" stroke-width="1.3" fill="none" opacity=".6"/>
<path d="M1088.5 595.5 C1100.4 600.1 1134.4 614.8 1160.1 623.1 C1185.8 631.4 1221.1 640.8 1242.7 645.1 C1264.3 649.5 1271.1 649.4 1289.5 649.2 C1307.9 649.0 1331.3 647.4 1352.9 643.7 C1374.5 640.0 1407.9 630.0 1418.9 627.2" stroke="#9a8b71" stroke-width="2" fill="none"/>
<path d="M1088.5 597.5 C1100.4 602.1 1134.4 617.0 1160.1 625.3 C1185.8 633.6 1221.1 642.9 1242.7 647.3 C1264.3 651.6 1271.1 651.6 1289.5 651.4 C1307.9 651.2 1331.3 649.6 1352.9 645.9 C1374.5 642.2 1407.9 632.1 1418.9 629.4" stroke="#d4c8b2" stroke-width="1.4" fill="none"/>
<path d="M1418.9 627.2 L1485.8 614.8" stroke="#b4a58b" stroke-width="3.4" fill="none"/>
<path d="M1344.1 647.9 C1344.5 653.4 1346.0 668.0 1346.8 680.9 C1347.6 693.8 1344.0 718.8 1348.7 725.0 C1353.4 731.2 1370.5 719.2 1374.9 718.1" stroke="#ddd2bf" stroke-width="2" fill="none"/>
<path d="M1089.9 598.3 L1088.5 650.6" stroke="#a99b82" stroke-width="1.4" fill="none"/>
<path d="M1168.4 707.9 L1193.2 715.3 L1193.2 726.3 L1168.4 719.4 Z" fill="#998e78"/>
<path d="M1053.9 652.0 L1066.5 652.0 L1083.0 675.4 L1102.3 705.7 L1102.3 716.7 L1053.9 722.7 Z" fill="#0d0d0f"/>
<path d="M1058.3 658.9 L1069.3 667.1 L1063.8 678.1 L1055.5 672.6 Z" fill="#2e2e33"/>
<path d="M1072.0 678.1 L1085.8 686.4 L1080.3 700.2 L1066.5 691.9 Z" fill="#2b2b30"/>
<path d="M1053.9 620.3 L1077.5 625.8 L1077.5 650.6 L1053.9 650.6 Z" fill="#783a2e"/>
<path d="M1053.9 562.5 L1076.2 568.0 L1076.2 598.3 L1063.8 628.6 L1053.9 625.8 Z" fill="#b99359" opacity=".8"/>
<path d="M1053.9 581.8 L1076.2 592.8" stroke="#926836" stroke-width="2.2" fill="none"/>
<path d="M1058.3 565.3 L1058.3 584.5" stroke="#926836" stroke-width="2.2" fill="none"/>
<path d="M1066.5 568.0 L1066.5 588.7" stroke="#926836" stroke-width="2.2" fill="none"/>
<path d="M1074.2 601.1 L1061.0 628.6" stroke="#926836" stroke-width="2.2" fill="none"/>
<path d="M1417.6 666.6 L1449.2 674.0 L1485.8 680.9 L1485.8 693.3 L1449.2 686.4 L1417.6 678.1 Z" fill="#6f5433"/>
<path d="M1446.5 689.2 L1485.8 696.0 L1485.8 741.5 L1446.5 733.2 Z" fill="#7e817c"/>
<path d="M1446.5 708.4 L1485.8 715.3" stroke="#887751" stroke-width="1.6" fill="none"/>
<path d="M1469.9 444.7 L1485.8 444.1 L1485.8 557.0 L1471.8 557.0 Z" fill="#706557"/>
<path d="M1471.8 557.0 L1485.8 557.0 L1485.8 635.5 L1475.4 632.7 Z" fill="#857869"/>
<path d="M1464.4 455.2 L1471.3 453.0 L1471.3 458.5 L1465.2 460.1 Z" fill="#624229"/>
<path d="M1417.6 430.9 C1417.8 438.7 1418.8 456.7 1418.9 477.7 C1419.0 498.7 1418.5 543.8 1418.4 557.0" stroke="#d5d0c0" stroke-width="2.2" fill="none"/>
<path d="M1418.4 557.0 L1418.9 625.8" stroke="#d5d0c0" stroke-width="2.2" fill="none"/>
<path d="M1053.9 811.7 C1062.4 811.2 1082.8 810.0 1105.1 808.9 C1127.4 807.8 1155.6 806.1 1187.7 805.3 C1219.8 804.5 1261.1 804.5 1297.8 804.2 C1334.5 803.9 1376.6 803.1 1407.9 803.4 C1439.2 803.7 1472.8 805.7 1485.8 806.2 L1486 828 L1054 828 Z" fill="#aaac96"/>
<path d="M1053.9 817.2 C1067.0 816.5 1110.3 814.3 1132.6 813.1 C1154.9 811.9 1160.2 810.5 1187.7 809.8 C1215.2 809.1 1261.1 809.2 1297.8 808.9 C1334.5 808.6 1376.6 807.6 1407.9 808.1 C1439.2 808.6 1472.8 811.1 1485.8 811.7 L1486 828 L1054 828 Z" fill="#0d0b0a"/>
<path d="M1053.9 815.8 L1146.4 810.9 L1204.2 811.7 L1226.2 825.4 L1053.9 825.4 Z" fill="#87523e"/>
<rect x="1040" y="825" width="446" height="3" fill="#714a40"/>
<path d="M1053.9 316.9 C1062.4 314.5 1082.8 305.7 1105.1 302.6 C1127.4 299.5 1160.2 299.4 1187.7 298.5 C1215.2 297.6 1242.8 297.2 1270.3 297.1 C1297.8 297.0 1325.4 297.1 1352.9 297.7 C1380.4 298.3 1413.3 298.5 1435.5 300.7 C1457.7 302.9 1477.4 309.2 1485.8 310.9" stroke="#3b2a1a" stroke-width="10" fill="none" stroke-linecap="round"/>
<path d="M1053.9 326.3 C1058.8 323.8 1072.2 315.2 1083.0 311.2 C1093.8 307.2 1112.8 303.6 1118.8 302.1" stroke="#3b2a1a" stroke-width="9" fill="none" stroke-linecap="round"/>
<path d="M1053.9 338.7 L1072.0 320.8" stroke="#48321f" stroke-width="7" fill="none" stroke-linecap="round"/>
<path d="M1457.5 304.3 L1485.8 323.5" stroke="#3b2a1a" stroke-width="9" fill="none" stroke-linecap="round"/>
<path d="M1471.3 318.0 L1485.8 337.3" stroke="#3b2a1a" stroke-width="7" fill="none" stroke-linecap="round"/>
<path d="M1085.8 322.2 C1095.9 323.8 1129.4 327.4 1146.4 331.8 C1163.4 336.2 1177.6 344.0 1187.7 348.9 C1197.8 353.8 1203.7 359.2 1206.9 361.3" stroke="#4b3622" stroke-width="4.2" fill="none" stroke-linecap="round"/>
<path d="M1168.4 413.0 C1170.7 408.6 1176.2 394.8 1182.2 386.9 C1188.2 379.0 1194.1 372.4 1204.2 365.4 C1214.3 358.4 1227.1 350.4 1242.7 344.7 C1258.3 339.0 1274.8 334.1 1297.8 331.0 C1320.8 327.9 1349.1 325.9 1380.4 326.3 C1411.7 326.7 1468.2 332.3 1485.8 333.5" stroke="#4b3622" stroke-width="5" fill="none" stroke-linecap="round"/>
<path d="M1333.6 381.4 C1336.8 378.3 1342.8 368.9 1352.9 362.6 C1363.0 356.3 1380.4 348.0 1394.2 343.4 C1408.0 338.8 1420.2 337.5 1435.5 335.1 C1450.8 332.7 1477.4 330.1 1485.8 329.1" stroke="#4b3622" stroke-width="3.6" fill="none" stroke-linecap="round"/>
<path d="M1146.4 379.2 C1157.9 377.6 1194.6 370.5 1215.2 369.3 C1235.8 368.1 1249.7 369.0 1270.3 372.0 C1290.9 375.0 1318.4 380.7 1339.1 387.4 C1359.8 394.1 1381.8 405.8 1394.2 412.2 C1406.6 418.6 1410.2 423.7 1413.4 426.0" stroke="#624527" stroke-width="1.4" fill="none" stroke-linecap="round"/>
<path d="M1088.5 468.1 C1092.6 464.3 1101.4 453.1 1113.3 445.2 C1125.2 437.3 1143.1 427.6 1160.1 420.5 C1177.1 413.4 1196.8 406.5 1215.2 402.6 C1233.6 398.7 1252.0 397.3 1270.3 397.1 C1288.6 396.9 1306.9 398.2 1325.3 401.2 C1343.7 404.2 1365.0 409.9 1380.4 415.0 C1395.8 420.1 1411.4 428.8 1417.6 431.5" stroke="#513a27" stroke-width="6.5" fill="none" stroke-linecap="round"/>
<path d="M1053.9 358.8 C1062.4 359.9 1089.7 361.5 1105.1 365.4 C1120.5 369.2 1139.5 379.1 1146.4 381.9" stroke="#362617" stroke-width="5" fill="none" stroke-linecap="round"/>
<path d="M1053.9 370.9 C1061.1 370.9 1081.4 369.4 1096.8 370.9 C1112.2 372.4 1138.1 378.5 1146.4 380.0" stroke="#553b26" stroke-width="1.6" fill="none" stroke-linecap="round"/>
<path d="M1053.9 399.3 L1107.8 408.9" stroke="#4b3622" stroke-width="3" fill="none" stroke-linecap="round"/>
<path d="M1053.9 428.2 C1057.8 430.1 1070.3 435.2 1077.5 439.7 C1084.7 444.1 1093.6 452.4 1096.8 454.9" stroke="#4b3622" stroke-width="2.2" fill="none" stroke-linecap="round"/>
<path d="M1053.9 450.2 L1077.5 450.7" stroke="#4b3622" stroke-width="1.8" fill="none" stroke-linecap="round"/>
<path d="M1418.9 426.8 C1422.6 425.9 1433.4 422.9 1441.0 421.3 C1448.6 419.7 1460.5 417.9 1464.4 417.2" stroke="#624527" stroke-width="1.5" fill="none" stroke-linecap="round"/>
<path d="M1418.9 435.1 C1424.0 433.7 1438.1 429.1 1449.2 426.8 C1460.3 424.5 1479.7 422.2 1485.8 421.3" stroke="#624527" stroke-width="1.5" fill="none" stroke-linecap="round"/>
<path d="M1053.9 487.4 L1080.3 521.8" stroke="#55402b" stroke-width="3.5" fill="none" stroke-linecap="round"/>
<path d="M1077.5 477.7 L1061.0 513.5" stroke="#644e35" stroke-width="2.5" fill="none" stroke-linecap="round"/>
<path d="M1053.9 512.1 L1080.3 517.7" stroke="#55402b" stroke-width="3" fill="none" stroke-linecap="round"/>
<path d="M1074.8 524.5 L1058.3 552.1" stroke="#8a6643" stroke-width="2.5" fill="none" stroke-linecap="round"/>
</g>
</svg></div>
<!-- floating buttons -->
<div class="abs fb" style="left:1426px;top:604px"></div>
<div class="abs fb" style="left:1426px;top:659px"></div>
<div class="abs fb" style="left:1426px;top:714px"></div>
<div class="abs fb" style="left:1426px;top:769px"></div>
<div class="t" style="left:1437px;top:619px;font-size:15px;color:#f2f2f2">2:1</div>
<svg class="abs" style="left:1436px;top:670px" width="24" height="24" viewBox="0 0 24 24"><rect x="1.6" y="5.4" width="21" height="13.4" rx="1.8" fill="#fff"/><path d="M5.4 9 L5.4 15 M18.8 9 L18.8 15 M5.4 12 L18.8 12" stroke="#3a3632" stroke-width="1.7" fill="none"/></svg>
<svg class="abs" style="left:1436px;top:725px" width="26" height="24" viewBox="0 0 26 24" fill="none" stroke="#fff" stroke-width="1.9" stroke-linecap="round" stroke-linejoin="round"><path d="M20.4 8.4 L20.4 6.6 Q20.4 5.2 19 5.2 L4.2 5.2 Q2.8 5.2 2.8 6.6 L2.8 16.6 Q2.8 18 4.2 18 L10.4 18"/><path d="M14.2 12.6 L21 19.4 M21 12.6 L14.2 19.4"/><circle cx="14" cy="19.6" r="1.3" fill="#fff" stroke="none"/><circle cx="21.2" cy="19.6" r="1.3" fill="#fff" stroke="none"/></svg>
<svg class="abs" style="left:1436px;top:780px" width="24" height="24" viewBox="0 0 24 24" fill="none" stroke="#fff" stroke-width="2" stroke-linecap="round" stroke-linejoin="round"><path d="M4.2 9 L4.2 4.6 L8.8 4.6 M15.8 4.6 L20.4 4.6 L20.4 9 M20.4 15.4 L20.4 19.8 L15.8 19.8 M8.8 19.8 L4.2 19.8 L4.2 15.4"/></svg>
<!--MAIN-END-->
<div class="abs" id="dlg" style="left:537px;top:152px;width:518px;height:702px;border-radius:14px;background:#1c1c1e;border:1px solid #3b3b3f;overflow:hidden">
<div class="abs" style="left:0;top:625px;width:518px;height:77px;background:#2a2a2e"></div>
</div>
<div class="t" style="left:705px;top:176.5px;font-size:18px;color:#f0f0f0;letter-spacing:0.4px">Photo Export Settings</div>
<svg class="abs" style="left:1010px;top:176px" width="22" height="22" viewBox="0 0 22 22" stroke="#f0f0f0" stroke-width="1.5" fill="none"><path d="M2.8 2.4 L18.8 18.4 M18.8 2.4 L2.8 18.4"/></svg>
<div class="abs" style="left:571px;top:226px;width:449px;height:40px;border-radius:20px;background:#2c2c30"></div>
<div class="abs" style="left:796px;top:228px;width:222px;height:35px;border-radius:18px;background:#47474c"></div>
<div class="t" style="left:602px;top:239px;font-size:16px;color:#f2f2f2;letter-spacing:0.2px">Export reframed photo</div>
<div class="t" style="left:845px;top:239px;font-size:16px;color:#f2f2f2;letter-spacing:0.17px">Export 360 photo</div>
<!-- rows -->
<div class="t lab" style="top:304px;letter-spacing:-0.08px">Folder Name:</div>
<div class="abs" style="left:698px;top:293px;width:315px;height:35px;border-radius:5px;background:#121212"></div>
<div class="t" style="left:711px;top:304px;font-size:16px;color:#f4f4f4;letter-spacing:-0.36px">IMG_20251012_155131_00_072(1).jpg</div>
<div class="t lab" style="top:359px;letter-spacing:-0.41px">File Path:</div>
<div class="abs" style="left:698px;top:348px;width:225px;height:35px;border-radius:5px;background:#2c2c30"></div>
<div class="t" style="left:705px;top:359px;font-size:16px;color:#a9a9ab">C:/Users/jose...anueva/export</div>
<div class="abs" style="left:933px;top:348px;width:80px;height:35px;border-radius:5px;background:#2c2c30"></div>
<div class="t" style="left:940px;top:359px;font-size:16px;color:#f4f4f4;letter-spacing:-0.45px">Change...</div>
<div class="abs" style="left:578px;top:404px;width:438px;height:1px;background:#38383c"></div>
<div class="t lab" style="top:435px;letter-spacing:-0.1px">Resolution:</div>
<div class="abs" style="left:697px;top:424px;width:103px;height:35px;border-radius:5px;background:#121212"></div>
<div class="abs" style="left:821px;top:424px;width:102px;height:35px;border-radius:5px;background:#121212"></div>
<div class="t" style="left:729px;top:435px;font-size:16px;color:#f4f4f4">11904</div>
<div class="t" style="left:807px;top:435px;font-size:15px;color:#a9a9ab">x</div>
<div class="t" style="left:857px;top:435px;font-size:16px;color:#f4f4f4">5952</div>
<div class="t lab" style="top:490px;letter-spacing:-0.08px">Media Type:</div>
<div class="abs" style="left:698px;top:480px;width:225px;height:34px;border-radius:5px;background:#323236"></div>
<div class="t" style="left:709px;top:490px;font-size:16px;color:#6e6e72">Photo</div>
<svg class="abs" style="left:901px;top:491px" width="14" height="12" viewBox="0 0 14 12" fill="none" stroke="#6e6e72" stroke-width="1.8" stroke-linecap="round" stroke-linejoin="round"><path d="M2.6 3.8 L7 8 L11.4 3.8"/></svg>
<div class="t lab" style="top:545px;letter-spacing:0.2px">Output Format:</div>
<div class="abs" style="left:698px;top:535px;width:225px;height:34px;border-radius:5px;background:#323236"></div>
<div class="t" style="left:709px;top:545px;font-size:16px;color:#6e6e72">JPG</div>
<svg class="abs" style="left:901px;top:546px" width="14" height="12" viewBox="0 0 14 12" fill="none" stroke="#6e6e72" stroke-width="1.8" stroke-linecap="round" stroke-linejoin="round"><path d="M2.6 3.8 L7 8 L11.4 3.8"/></svg>
<!-- footer -->
<div class="t" style="left:558px;top:798px;font-size:14px;color:#77777b">File size</div>
<div class="t" style="left:558px;top:819px;font-size:15.5px;color:#e8e8e8">37.50MB (Estimate)</div>
<div class="abs" style="left:762px;top:796px;width:138px;height:40px;border-radius:5px;background:#38383c"></div>
<div class="t" style="left:772px;top:805px;font-size:19px;color:#f2f2f2">Add to Queue</div>
<div class="abs" style="left:910px;top:796px;width:123px;height:40px;border-radius:5px;background:#ffd400"></div>
<div class="t" style="left:921px;top:805px;font-size:19px;color:#0a0a0a;letter-spacing:0.15px">Start Export</div>
<!--DIALOG-END-->
<svg class="abs" style="left:1540px;top:144px" width="30" height="30" viewBox="0 0 30 30" fill="#7d7d7d">
<rect x="4.6" y="9.6" width="17.6" height="11.8" rx="2.6"/>
<path d="M21 13.6 L25.4 10.8 Q26.2 10.4 26.2 11.4 L26.2 19.6 Q26.2 20.6 25.4 20.2 L21 17.4 Z"/>
<path d="M6 3 Q8.2 5.4 10.4 3.8 Q12.6 2.2 14.6 3.8 Q16.8 5.4 19 3.8 Q20.4 2.8 22 3.4" fill="none" stroke="#7d7d7d" stroke-width="1.7" stroke-linecap="round"/>
<path d="M6 27.6 Q8.2 25.2 10.4 26.8 Q12.6 28.4 14.6 26.8 Q16.8 25.2 19 26.8 Q20.4 27.8 22 27.2" fill="none" stroke="#7d7d7d" stroke-width="1.7" stroke-linecap="round"/>
</svg>
<svg class="abs" style="left:1540px;top:236px" width="30" height="30" viewBox="0 0 30 30" fill="#7d7d7d">
<path d="M5 9.4 Q5 8.2 6.2 8.2 L10.6 8.2 Q9.8 3.2 13.4 3.2 Q17 3.2 16.2 8.2 L20.6 8.2 Q21.8 8.2 21.8 9.4 L21.8 13.6 Q27.4 12.8 27.4 16.6 Q27.4 20.4 21.8 19.6 L21.8 25.8 Q21.8 27 20.6 27 L6.2 27 Q5 27 5 25.8 L5 21.4 Q9.2 22 9.2 18.6 Q9.2 15.2 5 15.8 Z"/>
</svg>
<svg class="abs" style="left:1540px;top:328px" width="32" height="30" viewBox="0 0 32 30" fill="none" stroke="#7d7d7d" stroke-width="1.8" stroke-linejoin="round">
<path d="M14.6 7.8 L4.8 7.8 Q3 7.8 3 9.6 L3 25 Q3 26.8 4.8 26.8 L24.6 26.8 Q26.4 26.8 26.4 25 L26.4 17.4"/>
<path d="M7.6 7.8 L7.6 26.8 M21.8 17 L21.8 26.8" stroke-width="1.4"/>
<path d="M3 12.4 L7.6 12.4 M3 17.2 L7.6 17.2 M3 22 L7.6 22 M21.8 22 L26.4 22" stroke-width="1.4"/>
<path d="M11.6 12.6 L19.4 17.2 L11.6 21.8 Z" fill="#7d7d7d" stroke-width="1.2"/>
<path d="M22.4 2.6 Q23 7 27.4 7.6 Q23 8.2 22.4 12.6 Q21.8 8.2 17.4 7.6 Q21.8 7 22.4 2.6 Z" fill="#7d7d7d" stroke="none"/>
<path d="M27.8 11.4 Q28.1 13.7 30.4 14 Q28.1 14.3 27.8 16.6 Q27.5 14.3 25.2 14 Q27.5 13.7 27.8 11.4 Z" fill="#7d7d7d" stroke="none"/>
</svg>
<svg class="abs" style="left:1540px;top:418px" width="30" height="28" viewBox="0 0 30 28" fill="#7d7d7d">
<path d="M10.8 8 Q10.8 3.6 14.6 3.6 Q18.4 3.6 18.4 8 Q18.4 10 17.4 11.6 Q16.6 13.2 17.6 15.2 L21.6 15.2 Q24 15.2 24 17.6 L24 20.6 L5.2 20.6 L5.2 17.6 Q5.2 15.2 7.6 15.2 L11.6 15.2 Q12.6 13.2 11.8 11.6 Q10.8 10 10.8 8 Z"/>
<rect x="6" y="22.6" width="17.4" height="1.8"/>
</svg>
<div class="t" style="left:1539px;top:444.5px;font-size:8px;color:#7d7d7d;letter-spacing:0.05px;-webkit-text-stroke:0.2px #7d7d7d">Insta360</div>
<svg class="abs" style="left:1540px;top:514px" width="30" height="30" viewBox="0 0 30 30" fill="#7d7d7d">
<path d="M8.4 3.8 L18.6 3.8 L18.6 8.6 Q18.6 9.6 19.6 9.6 L23.6 9.6 L23.6 13 L15.4 13 L13.4 10.6 Q12.8 9.8 11.6 9.8 L7 9.8 L7 5.2 Q7 3.8 8.4 3.8 Z"/>
<path d="M20 3.8 L23.6 7.8 L20.8 7.8 Q20 7.8 20 7 Z"/>
<path d="M5.2 11.4 L11.2 11.4 Q12 11.4 12.6 12.2 L14.4 14.6 L24.2 14.6 Q26 14.6 26 16.4 L26 24.8 Q26 26.6 24.2 26.6 L5.2 26.6 Q3.4 26.6 3.4 24.8 L3.4 13.2 Q3.4 11.4 5.2 11.4 Z"/>
</svg>
<svg class="abs" style="left:1540px;top:607px" width="30" height="30" viewBox="0 0 30 30">
<circle cx="14.7" cy="14.6" r="12.6" fill="#7d7d7d"/>
<circle cx="14.7" cy="8.6" r="1.9" fill="#15191c"/>
<rect x="13.2" y="12.2" width="3" height="9.6" rx="1" fill="#15191c"/>
</svg>
<!--RIGHTBAR-END-->
</body>
</html>
